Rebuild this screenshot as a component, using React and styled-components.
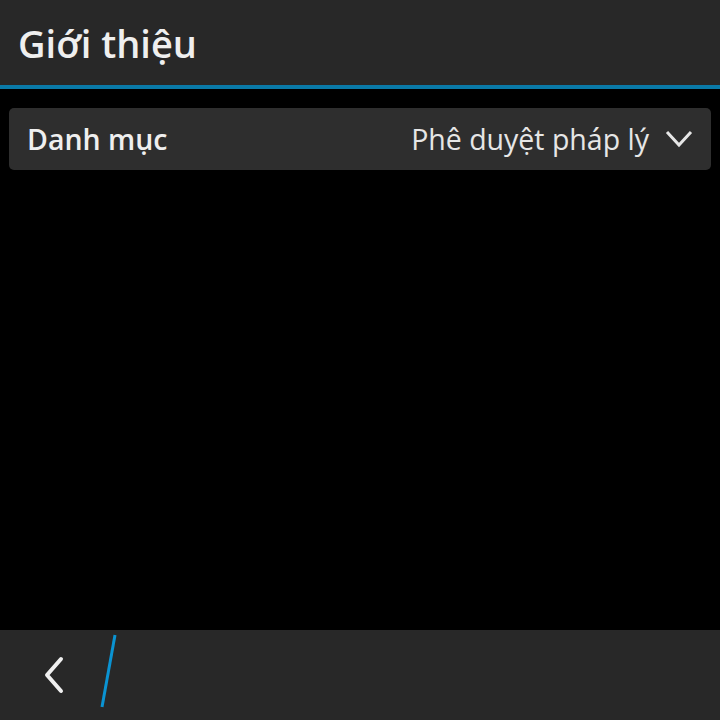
import React from 'react';
import styled, { createGlobalStyle } from 'styled-components';

const GlobalStyle = createGlobalStyle`
  html, body {
    margin: 0;
    padding: 0;
    background: #000;
  }
  #root {
    height: 720px;
  }
`;

const Screen = styled.div`
  width: 720px;
  height: 720px;
  display: flex;
  flex-direction: column;
  background: #000;
  font-family: "Open Sans", "Noto Sans", sans-serif;
  color: #f0f0f0;
`;

const TitleBar = styled.header`
  height: 85px;
  background: #282828;
  border-bottom: 4px solid #0a7aa8;
  display: flex;
  align-items: center;
  padding: 0 18px;
  box-sizing: content-box;
`;

const Title = styled.h1`
  margin: 0;
  font-size: 38px;
  font-weight: 600;
  color: #efefef;
`;

const Content = styled.main`
  flex: 1;
  padding: 19px 9px;
`;

const DropRow = styled.div`
  height: 62px;
  border-radius: 5px;
  background: #2e2e2e;
  display: flex;
  align-items: center;
  justify-content: space-between;
  padding: 0 18px 0 18px;
`;

const Label = styled.span`
  font-size: 28.5px;
  font-weight: 600;
  color: #efefef;
`;

const Value = styled.span`
  display: flex;
  align-items: center;
  gap: 16px;
  font-size: 28.5px;
  font-weight: 400;
  color: #e6e6e6;
`;

const ActionBar = styled.footer`
  height: 90px;
  background: #282828;
  display: flex;
  align-items: center;
  padding-left: 42px;
  gap: 32px;
`;

const SlashWrap = styled.div`
  align-self: flex-start;
  margin-top: 4px;
  display: flex;
`;

const Chevron = () => (
  <svg width="28" height="18" viewBox="0 0 28 18">
    <path d="M2 2 L14 15 L26 2" fill="none" stroke="#e6e6e6" strokeWidth="3" />
  </svg>
);

const Back = () => (
  <svg width="24" height="38" viewBox="0 0 24 38">
    <path d="M19 3 L5 19 L19 35" fill="none" stroke="#f0f0f0" strokeWidth="4" strokeLinecap="round" strokeLinejoin="round" />
  </svg>
);

const Slash = () => (
  <svg width="20" height="74" viewBox="0 0 20 74">
    <path d="M17 1 L4 73" stroke="#0a93d2" strokeWidth="3" />
  </svg>
);

export default function App() {
  return (
    <>
      <GlobalStyle />
      <Screen>
        <TitleBar>
          <Title>Giới thiệu</Title>
        </TitleBar>
        <Content>
          <DropRow>
            <Label>Danh mục</Label>
            <Value>
              Phê duyệt pháp lý
              <Chevron />
            </Value>
          </DropRow>
        </Content>
        <ActionBar>
          <Back />
          <SlashWrap>
            <Slash />
          </SlashWrap>
        </ActionBar>
      </Screen>
    </>
  );
}
